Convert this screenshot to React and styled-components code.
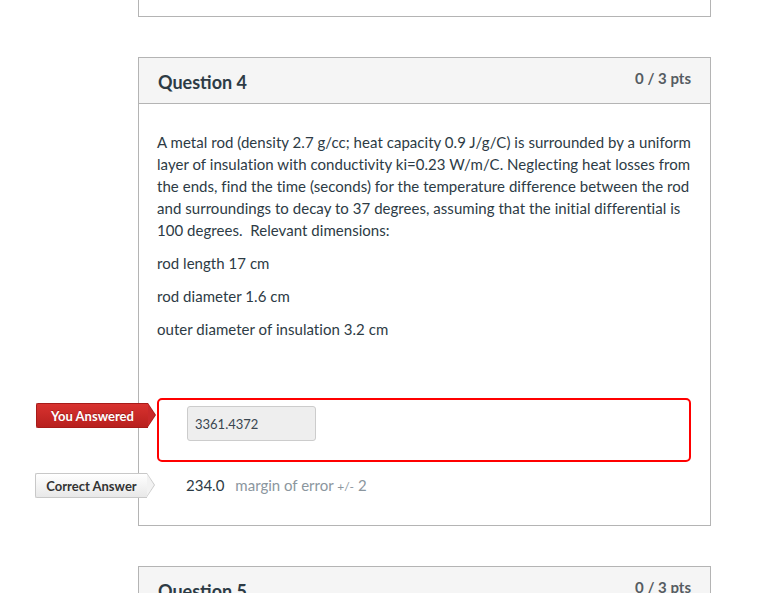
import styled, { createGlobalStyle } from "styled-components";

const GlobalStyle = createGlobalStyle`
  body {
    margin: 0;
    background: #fff;
    font-family: Lato, "Open Sans", "Liberation Sans", sans-serif;
    color: #2d3b45;
  }
`;

const Page = styled.div`
  width: 573px;
  margin-left: 138px;
  display: flex;
  flex-direction: column;
  gap: 40px;
`;

const PrevCard = styled.div`
  height: 16px;
  border: 1px solid #b4b4b4;
  border-top: none;
`;

const Card = styled.div`
  border: 1px solid #b4b4b4;
`;

const Header = styled.div`
  display: flex;
  justify-content: space-between;
  align-items: flex-start;
  height: 45px;
  padding: 0 19px 0 19px;
  background: #f5f5f5;
  border-bottom: 1px solid #b4b4b4;
`;

const Title = styled.h2`
  margin: 13px 0 0;
  font-size: 18px;
  font-weight: 700;
  line-height: 22px;
  color: #2d3b45;
`;

const Points = styled.div`
  margin-top: 10px;
  font-size: 15px;
  font-weight: 700;
  line-height: 20px;
  color: #555c62;
`;

const Body = styled.div`
  padding: 27px 19px 28px 18px;
`;

const Text = styled.p`
  margin: 0 0 11px;
  font-size: 15px;
  letter-spacing: 0.04px;
  line-height: 22px;
  color: #2d3b45;
`;

const Answers = styled.div`
  margin-top: 58px;
  display: flex;
  flex-direction: column;
  gap: 11px;
`;

const AnswerRow = styled.div`
  position: relative;
  display: flex;
  align-items: center;
  padding: ${({ $wrong }) => ($wrong ? "6px 28px 19px" : "0 29px")};
  border: ${({ $wrong }) => ($wrong ? "2px solid #ff0000" : "none")};
  border-radius: 5px;
  min-height: 24px;
`;

const Label = styled.div`
  position: absolute;
  left: ${({ $wrong }) => ($wrong ? "-123px" : "-122px")};
  top: ${({ $wrong }) => ($wrong ? "3px" : "0")};
  width: 112px;
  height: 25px;
  box-sizing: border-box;
  display: flex;
  align-items: center;
  justify-content: center;
  font-size: 13px;
  font-weight: 700;
  border-radius: 2px 0 0 2px;
  color: ${({ $wrong }) => ($wrong ? "#fff" : "#333")};
  text-shadow: ${({ $wrong }) =>
    $wrong ? "0 -1px 0 rgba(0,0,0,0.25)" : "none"};
  background: ${({ $wrong }) =>
    $wrong
      ? "linear-gradient(#d8322f, #b8201e)"
      : "linear-gradient(#ffffff, #e8e8e8)"};
  border: 1px solid ${({ $wrong }) => ($wrong ? "#a71b19" : "#c8c8c8")};
  border-right: none;

  &::before {
    content: "";
    position: absolute;
    right: -8px;
    top: -1px;
    border-top: 12.5px solid transparent;
    border-bottom: 12.5px solid transparent;
    border-left: 8px solid ${({ $wrong }) => ($wrong ? "#a71b19" : "#c8c8c8")};
  }

  &::after {
    content: "";
    position: absolute;
    right: -7px;
    top: 0;
    border-top: 11.5px solid transparent;
    border-bottom: 11.5px solid transparent;
    border-left: 7px solid ${({ $wrong }) => ($wrong ? "#c8292a" : "#f2f2f2")};
  }
`;

const Input = styled.div`
  width: 129px;
  height: 35px;
  box-sizing: border-box;
  display: flex;
  align-items: center;
  padding-left: 7px;
  background: #eeeeee;
  border: 1px solid #cccccc;
  border-radius: 3px;
  font-size: 13px;
  color: #3a4650;
`;

const Value = styled.span`
  font-size: 15px;
  color: #2d3b45;
`;

const Margin = styled.span`
  margin-left: 11px;
  font-size: 15px;
  color: #8b969e;

  small {
    font-size: 12px;
  }
`;

const Question = ({ title, children }) => (
  <Card>
    <Header>
      <Title>{title}</Title>
      <Points>0 / 3 pts</Points>
    </Header>
    {children}
  </Card>
);

export default function App() {
  return (
    <>
      <GlobalStyle />
      <Page>
        <PrevCard />
        <Question title="Question 4">
          <Body>
            <Text>
              A metal rod (density 2.7 g/cc; heat capacity 0.9 J/g/C) is
              surrounded by a uniform layer of insulation with conductivity
              ki=0.23 W/m/C. Neglecting heat losses from the ends, find the
              time (seconds) for the temperature difference between the rod
              and surroundings to decay to 37 degrees, assuming that the
              initial differential is 100 degrees.&nbsp; Relevant dimensions:
            </Text>
            <Text>rod length 17 cm</Text>
            <Text>rod diameter 1.6 cm</Text>
            <Text>outer diameter of insulation 3.2 cm</Text>
            <Answers>
              <AnswerRow $wrong>
                <Label $wrong>You Answered</Label>
                <Input>3361.4372</Input>
              </AnswerRow>
              <AnswerRow>
                <Label>Correct Answer</Label>
                <Value>234.0</Value>
                <Margin>
                  margin of error <small>+/-</small> 2
                </Margin>
              </AnswerRow>
            </Answers>
          </Body>
        </Question>
        <Question title="Question 5" />
      </Page>
    </>
  );
}
